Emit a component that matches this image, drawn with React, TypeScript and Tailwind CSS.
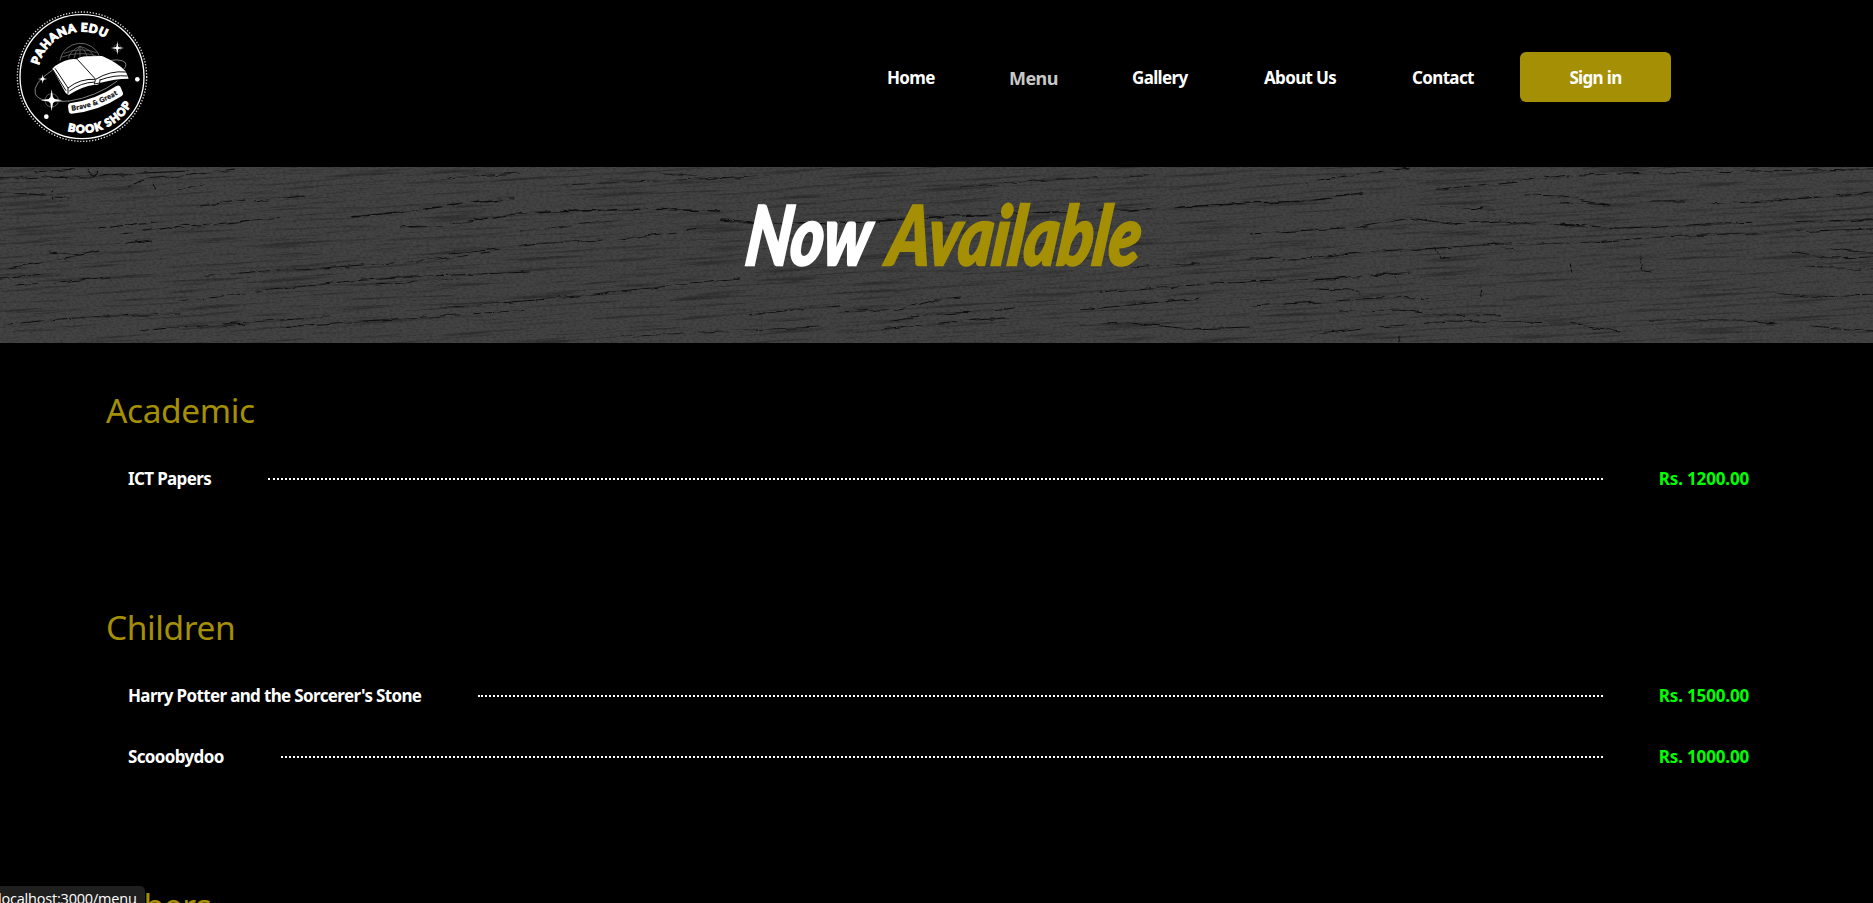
type Item = { name: string; price: string };

const sections: { title: string; items: Item[] }[] = [
  { title: "Academic", items: [{ name: "ICT Papers", price: "Rs. 1200.00" }] },
  {
    title: "Children",
    items: [
      { name: "Harry Potter and the Sorcerer's Stone", price: "Rs. 1500.00" },
      { name: "Scooobydoo", price: "Rs. 1000.00" },
    ],
  },
  { title: "Others", items: [] },
];

function Sparkle({ x, y, r }: { x: number; y: number; r: number }) {
  const k = r * 0.14;
  return (
    <path
      fill="#fff"
      transform={`translate(${x} ${y})`}
      d={`M0 ${-r}L${k} ${-k}L${r} 0L${k} ${k}L0 ${r}L${-k} ${k}L${-r} 0L${-k} ${-k}Z`}
    />
  );
}

function Logo() {
  return (
    <svg viewBox="0 0 510 510" className="h-[170px] w-[170px] shrink-0" fill="none">
      <defs>
        <path id="arcTop" d="M117 196A134 134 0 0 1 381 229" />
        <path id="arcBottom" d="M203 393A170 170 0 0 0 406 289" />
        <path id="arcRibbon" d="M215 332Q292 322 360 279" />
      </defs>
      <circle cx="246" cy="230" r="194" stroke="#ddd" strokeWidth="4" strokeDasharray="4 5" />
      <circle cx="246" cy="230" r="186" stroke="#fff" strokeWidth="4" />
      <g stroke="#777" strokeWidth="2">
        <path d="M180 182A62 62 0 0 1 300 172" stroke="#999" />
        <path d="M205 175Q212 150 240 139Q273 148 282 170M240 139V172M192 160Q240 140 290 158M183 172Q240 150 298 170M222 175Q224 155 240 139Q256 150 262 170" />
      </g>
      <path d="M158 210Q96 250 106 282Q118 310 206 303M306 187Q360 172 376 188Q382 200 366 212M204 304Q290 290 352 243" stroke="#999" strokeWidth="2.5" />
      <path d="M157 206L165 198Q205 172 231 178Q236 170 262 169L306 168Q352 187 377 214L386 236Q345 236 299 249Q292 258 284 254Q245 259 206 285L197 279Z" fill="#fff" />
      <g stroke="#111" strokeWidth="3">
        <path d="M232 178L287 238M287 238Q330 211 378 216M287 238Q240 235 204 264M204 264L165 205M204 264V281M300 240Q343 224 382 228M284 246Q242 248 208 273M159 210L198 272" />
        <path d="M286 240L283 252L299 249L300 238" />
      </g>
      <path d="M213 309Q287 299 348 259Q358 253 362 262L369 279Q371 285 364 289Q296 334 215 341Q207 342 206 334L204 319Q204 310 213 309Z" fill="#fff" />
      <text fill="#111" stroke="#111" strokeWidth=".8" fontFamily="Lato, sans-serif" fontWeight="900" fontSize="21">
        <textPath href="#arcRibbon" textLength="148">Brave &amp; Great</textPath>
      </text>
      <g fill="#fff" fontFamily="Lato, sans-serif" fontWeight="900" stroke="#fff" strokeWidth="3">
        <text fontSize="35">
          <textPath href="#arcTop" textLength="250">PAHANA EDU</textPath>
        </text>
        <text fontSize="33">
          <textPath href="#arcBottom" textLength="222">BOOK SHOP</textPath>
        </text>
      </g>
      <circle cx="352" cy="144" r="11" stroke="#555" strokeWidth="2" />
      <circle cx="155" cy="301" r="20" stroke="#888" strokeWidth="2" />
      <Sparkle x={352} y={144} r={20} />
      <Sparkle x={128} y={237} r={14} />
      <Sparkle x={155} y={301} r={33} />
      <circle cx="352" cy="144" r="5" fill="#fff" />
      <circle cx="128" cy="237" r="5" fill="#fff" />
      <circle cx="155" cy="301" r="9" fill="#fff" />
      <circle cx="412" cy="238" r="7" fill="#fff" />
      <circle cx="139" cy="350" r="7" fill="#fff" />
    </svg>
  );
}

function Wood() {
  return (
    <svg className="absolute inset-0 h-full w-full" viewBox="0 0 1873 176" preserveAspectRatio="none" fill="none">
      <defs>
        <filter id="grain" x="0" y="0" width="100%" height="100%" colorInterpolationFilters="sRGB">
          <feTurbulence type="fractalNoise" baseFrequency="0.012 0.36" numOctaves="4" seed="7" />
          <feColorMatrix values="0 0 0 0 0.05  0 0 0 0 0.05  0 0 0 0 0.05  4 0 0 0 -2.1" />
        </filter>
        <filter id="noise" x="0" y="0" width="100%" height="100%" colorInterpolationFilters="sRGB">
          <feTurbulence type="fractalNoise" baseFrequency="0.3 0.6" numOctaves="2" seed="3" />
          <feColorMatrix values="0 0 0 0 0.08  0 0 0 0 0.08  0 0 0 0 0.08  1.6 0 0 0 -0.65" />
        </filter>
        <filter id="rough" x="0" y="0" width="1873" height="176" filterUnits="userSpaceOnUse" colorInterpolationFilters="sRGB">
          <feTurbulence type="fractalNoise" baseFrequency="0.05 0.15" numOctaves="4" seed="5" />
          <feDisplacementMap in="SourceGraphic" scale="5" xChannelSelector="R" yChannelSelector="G" result="bent" />
          <feTurbulence type="fractalNoise" baseFrequency="0.05 0.3" numOctaves="3" seed="11" />
          <feColorMatrix values="0 0 0 0 0  0 0 0 0 0  0 0 0 0 0  5 0 0 0 -1.7" result="breaks" />
          <feComposite in="bent" in2="breaks" operator="in" />
        </filter>
      </defs>
      <g transform="rotate(-3.5 936 88)" opacity="0.36">
        <rect x="-40" y="-80" width="1960" height="340" filter="url(#grain)" />
      </g>
      <rect width="1873" height="176" filter="url(#noise)" opacity="0.4" />
      <g filter="url(#rough)" stroke="#0c0c0c" strokeWidth="1">
        <path d="M0 12L40 10L85 11L120 7L190 4M35 5L75 2M88 2L93 10L98 4M128 20L145 12L190 8L235 3M152 15L155 24M0 26L30 27L70 30M52 20L53 35M160 26L205 17M200 39L246 33M255 35L285 30L305 28M98 62L140 56L178 54M115 68L160 62L190 58M190 60L235 55L280 50M125 76L152 73M0 102L40 96L70 90L100 84M50 85L80 88M0 112L45 107M15 118L60 115L110 110" strokeWidth="1.2" />
        <path d="M352 50L425 42L470 36L515 32M400 60L440 59L520 46L640 42L720 44M720 53L790 57L850 56L880 54L935 50L1000 47L1060 45L1130 43L1250 36L1310 34L1362 26" strokeWidth="1.4" />
        <path d="M450 87L500 82L530 77L620 72L700 62M200 110L262 104L320 101L420 94L490 86M165 135L220 130L280 122L350 114L430 109L530 105M375 118L460 112M0 158L60 152L110 149L180 147M130 165L170 161L250 155L330 150M190 160L250 157M280 160L350 155L410 151L530 143M440 141L500 136L560 131L620 124L740 112" />
        <path d="M750 148L800 142L840 139M840 145L900 142L935 133L960 131M880 156L930 148L1000 143L1020 140M880 162L950 155L1020 150M1080 158L1130 156L1190 162L1250 160M1080 143L1130 138L1200 131M1100 125L1160 120L1250 115L1330 112L1390 106" />
        <path d="M1305 15L1360 7L1410 1M1250 67L1310 63L1360 60L1410 51L1450 57L1500 54L1590 60M1250 91L1300 92L1360 85L1440 81L1500 77L1570 77M1250 115L1300 114L1370 109L1410 105M1430 23L1510 15L1570 8M1440 40L1505 41M1525 28L1562 29L1610 38L1560 35M1650 34L1685 34M1690 38L1750 35L1873 26M1580 76L1660 70L1750 66L1873 62M1560 57L1630 62L1720 56L1873 53" strokeWidth="1.2" />
        <path d="M1250 139L1320 135L1390 130L1430 132M1310 122L1350 123L1360 126M1390 104L1398 115M1435 80L1440 91L1450 92M1500 80L1515 83M1480 120L1482 130M1340 144L1400 143L1440 148L1500 149M1310 168L1380 160L1450 154L1510 155L1570 156L1620 165M1650 153L1740 153L1873 164M1770 126L1820 130L1873 128M1790 84L1830 91L1873 90M1830 82L1873 86M1790 98L1873 103M1640 88L1642 104L1650 105M1580 8L1700 5L1873 2M1398 168L1400 176M1570 96L1572 106" />
        <path d="M520 64L620 53M560 18L700 12L770 8M640 4L740 12M430 12L520 6M960 20L1060 12L1150 9M1040 78L1100 72M1130 100L1200 96M620 170L720 164L820 160" strokeWidth=".8" />
      </g>
    </svg>
  );
}

const link = "leading-none tracking-[-0.65px] pt-px";

export default function App() {
  return (
    <div className="relative h-[903px] w-full overflow-hidden bg-black font-['Noto_Sans',sans-serif] text-[17px] font-bold text-white">
      <header className="flex h-[167px] items-start overflow-hidden">
        <Logo />
        <nav className="ml-[717px] mt-[52px] flex h-[50px] items-center">
          <a className={`${link} w-[122px]`}>Home</a>
          <a className="w-[123px] pt-px text-[18px] leading-none tracking-[-0.55px] text-[#c8c8c8]">Menu</a>
          <a className={`${link} w-[132px]`}>Gallery</a>
          <a className={`${link} w-[148px]`}>About Us</a>
          <a className={`${link} w-[108px]`}>Contact</a>
          <a className="flex h-[50px] w-[151px] items-center justify-center rounded-md bg-[#a58f05] pt-px leading-none tracking-[-0.65px]">
            Sign in
          </a>
        </nav>
      </header>

      <section className="relative h-[176px] overflow-hidden bg-[#434343]">
        <Wood />
        <h1 className="relative flex pl-[744px] pt-[11px] font-['Lato',sans-serif] text-[82px] font-black italic leading-[110px] [-webkit-text-stroke:2.5px_currentColor]">
          <span className="w-[142px] origin-[0_85px] -skew-x-[9deg] scale-x-[0.77] whitespace-nowrap">Now</span>
          <span className="w-[260px] origin-[0_85px] -skew-x-[9deg] scale-x-[0.785] whitespace-nowrap text-[#a58f05]">Available</span>
        </h1>
      </section>

      <main className="pl-[106px] pr-[124px] pt-[42px]">
        {sections.map((s) => (
          <section key={s.title} className="mb-[61px]">
            <h2 className="h-[63px] text-[33.5px] font-normal leading-[50px] tracking-[-0.4px] text-[#a58f05]">{s.title}</h2>
            <ul className="min-h-[93px] pb-[32px]">
              {s.items.map((i) => (
                <li key={i.name} className="flex h-[61px] items-center pl-[22px]">
                  <span className="pt-px tracking-[-0.65px]">{i.name}</span>
                  <span className="ml-[57px] mr-[56px] flex-1 border-t-2 border-dotted border-white" />
                  <span className="pt-px tracking-[-0.17px] text-[#00ff00]">{i.price}</span>
                </li>
              ))}
            </ul>
          </section>
        ))}
      </main>

      <div className="absolute left-0 top-[886px] h-[24px] w-[145px] overflow-hidden rounded-tr-[5px] bg-[#1f1f1f]">
        <span className="-ml-[2px] block whitespace-nowrap font-['Open_Sans',sans-serif] text-[14.5px] font-normal leading-[26px] tracking-[-0.2px]">
          localhost:3000/menu
        </span>
      </div>
    </div>
  );
}
